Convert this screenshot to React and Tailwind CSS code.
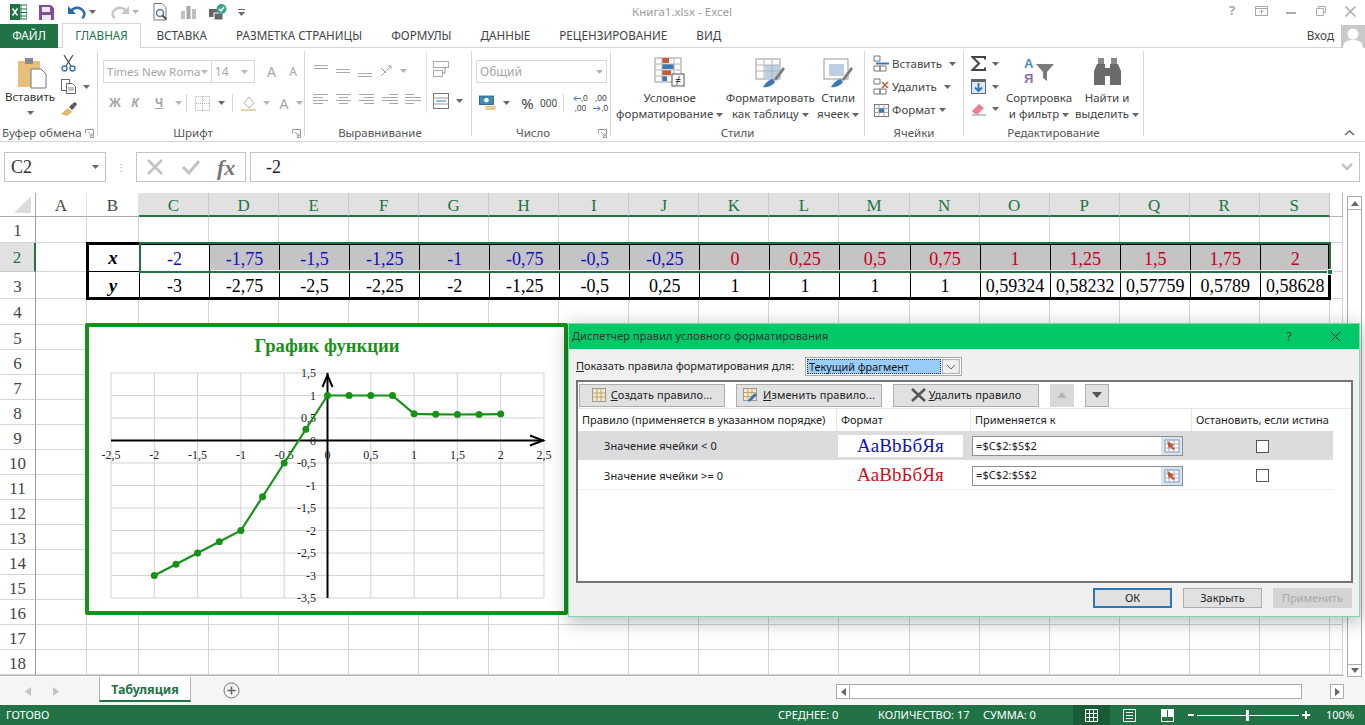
import React from "react";

const UI = "font-['Noto_Sans',sans-serif]";
const SERIF = "font-['Liberation_Serif',serif]";

const colLetters = "ABCDEFGHIJKLMNOPQRS".split("");
const xRow = ["-2", "-1,75", "-1,5", "-1,25", "-1", "-0,75", "-0,5", "-0,25", "0", "0,25", "0,5", "0,75", "1", "1,25", "1,5", "1,75", "2"];
const yRow = ["-3", "-2,75", "-2,5", "-2,25", "-2", "-1,25", "-0,5", "0,25", "1", "1", "1", "1", "0,59324", "0,58232", "0,57759", "0,5789", "0,58628"];
const rowNums = Array.from({ length: 18 }, (_, i) => i + 1);
const tabs = ["ВСТАВКА", "РАЗМЕТКА СТРАНИЦЫ", "ФОРМУЛЫ", "ДАННЫЕ", "РЕЦЕНЗИРОВАНИЕ", "ВИД"];

function Caret({ light }) {
  return (
    <svg width="7" height="4" viewBox="0 0 7 4" className="shrink-0">
      <path d="M0 0h7L3.5 4z" fill={light ? "#b5b5b5" : "#666"} />
    </svg>
  );
}

function Launcher() {
  return (
    <svg width="9" height="9" viewBox="0 0 9 9" className="shrink-0">
      <path d="M0.5 4V0.5H8.5V8.5H5M3 3l4 4M7 4.5V7H4.5" fill="none" stroke="#9a9a9a" />
    </svg>
  );
}

function Lines({ rows, w = 16 }) {
  return (
    <svg width={w} height="14" viewBox={"0 0 " + w + " 14"}>
      {rows.map((r, i) => (
        <line key={i} x1={r[1]} x2={r[2]} y1={r[0] + 0.5} y2={r[0] + 0.5} stroke="#a9a9a9" />
      ))}
    </svg>
  );
}

function Sep() {
  return <div className="w-px h-[18px] bg-[#d6d6d6]" />;
}

function GroupLabel({ children, shifted }) {
  return <div className={"absolute bottom-[-5px] left-0 right-0 text-center text-[11.5px] leading-[16px] text-[#555] " + (shifted ? "pr-[16px]" : "")}>{children}</div>;
}

function ArrowLeft() {
  return <svg width="8" height="7" viewBox="0 0 8 7"><path d="M8 3.5H1M3.500 1L1 3.500 3.500 6" fill="none" stroke="#3a76b5" /></svg>;
}

function ArrowRight() {
  return <svg width="8" height="7" viewBox="0 0 8 7"><path d="M0 3.500h7M4.500 1L7 3.500 4.500 6" fill="none" stroke="#3a76b5" /></svg>;
}

function ChartSvg() {
  const xs = [-2, -1.75, -1.5, -1.25, -1, -0.75, -0.5, -0.25, 0, 0.25, 0.5, 0.75, 1, 1.25, 1.5, 1.75, 2];
  const ys = [-3, -2.75, -2.5, -2.25, -2, -1.25, -0.5, 0.25, 1, 1, 1, 1, 0.59324, 0.58232, 0.57759, 0.5789, 0.58628];
  const px = (v) => 242.5 + 86.6 * v;
  const py = (v) => 117.5 - 45 * v;
  const xTicks = [-2.5, -2, -1.5, -1, -0.5, 0, 0.5, 1, 1.5, 2, 2.5];
  const yTicks = [1.5, 1, 0.5, 0, -0.5, -1, -1.5, -2, -2.5, -3, -3.5];
  const fmt = (v) => String(v).replace(".", ",");
  return (
    <svg width="475" height="284" viewBox="4 4 475 284" className="block">
      <text x="242" y="29" textAnchor="middle" fontFamily="Liberation Serif" fontWeight="700" fontSize="18.67" fill="#179117">График функции</text>
      {xTicks.map((t) => (
        <line key={t} x1={px(t)} x2={px(t)} y1="50" y2="275" stroke="#d2d2d2" />
      ))}
      {yTicks.map((t) => (
        <line key={t} x1={px(-2.5)} x2={px(2.5)} y1={py(t)} y2={py(t)} stroke="#d2d2d2" />
      ))}
      <line x1={px(-2.5)} x2={px(2.5)} y1={py(0)} y2={py(0)} stroke="#000" strokeWidth="2" />
      <line x1={px(0)} x2={px(0)} y1="50" y2="275" stroke="#000" strokeWidth="2" />
      <path d={"M" + (px(0) - 5) + " 64L" + px(0) + " 52L" + (px(0) + 5) + " 64"} fill="none" stroke="#000" strokeWidth="2" />
      <path d={"M" + (px(2.5) - 14) + " " + (py(0) - 5) + "L" + (px(2.5) - 1) + " " + py(0) + "L" + (px(2.5) - 14) + " " + (py(0) + 5)} fill="none" stroke="#000" strokeWidth="2" />
      {xTicks.map((t) => (
        <text key={t} x={px(t)} y="136" textAnchor="middle" fontFamily="Liberation Serif" fontSize="12" fill="#222">{fmt(t)}</text>
      ))}
      {yTicks.map((t) => (
        <text key={t} x="231" y={py(t) + 4} textAnchor="end" fontFamily="Liberation Serif" fontSize="12" fill="#222">{fmt(t)}</text>
      ))}
      <polyline points={xs.map((v, i) => px(v) + "," + py(ys[i])).join(" ")} fill="none" stroke="#179117" strokeWidth="2.2" />
      {xs.map((v, i) => (
        <circle key={v} cx={px(v)} cy={py(ys[i])} r="3.5" fill="#179117" />
      ))}
    </svg>
  );
}

function RangeIcon() {
  return (
    <svg width="16" height="16" viewBox="0 0 16 16">
      <rect x="1" y="2" width="14" height="12" fill="#fff" stroke="#7d95b5" />
      <path d="M1 6h14M1 10h14M5 2v12M10 2v12" stroke="#9db2cc" />
      <path d="M3 3l7 4-2 1 3 3-2 1-3-3-1 2z" fill="#c8502a" />
    </svg>
  );
}

function DlgBtn({ className, children }) {
  return <div className={"flex items-center justify-center h-[23px] border border-[#adadad] bg-[#e1e1e1] text-[11px] text-[#222] tracking-[0.1px] " + className}>{children}</div>;
}

function Dialog() {
  return (
    <div className={"absolute left-[568px] top-[323px] w-[792px] h-[294px] bg-[#f0f0f0] border border-[#7fd8ab] shadow-[0_4px_18px_rgba(0,0,0,0.3)] flex flex-col " + UI}>
      <div className="h-[25px] bg-[#00c868] flex items-center pl-[3px] text-[11px] text-[#333] tracking-[0.1px] shrink-0">
        <span>Диспетчер правил условного форматирования</span>
        <span className="ml-auto text-[13px] text-[#444] mr-[38px]">?</span>
        <svg width="11" height="11" viewBox="0 0 11 11" className="mr-[18px]"><path d="M0.5 0.5l10 10M10.5 0.5l-10 10" stroke="#333" /></svg>
      </div>
      <div className="flex items-center h-[19px] mt-[8px] ml-[7px] shrink-0">
        <span className="text-[11px] text-[#222] w-[229px] whitespace-nowrap"><u>П</u>оказать правила форматирования для:</span>
        <div className="w-[157px] h-[19px] border border-[#a8a8a8] bg-white flex items-center p-px">
          <div className="w-[136px] h-full bg-[#99ccf8] border border-dotted border-[#333] text-[10.8px] leading-[14px] text-[#111] px-px">Текущий фрагмент</div>
          <svg width="18" height="15" viewBox="0 0 18 15" className="ml-px"><rect x="0.5" y="0.5" width="17" height="14" fill="#f0f0f0" stroke="#aaa" /><path d="M5 6l4 4 4-4" fill="none" stroke="#555" /></svg>
        </div>
      </div>
      <div className="mt-[4px] ml-[7px] w-[777px] h-[203px] border-2 border-[#747474] bg-white shrink-0">
        <div className="flex items-center h-[26px] pl-px">
          <DlgBtn className="w-[146px] gap-[5px]">
            <svg width="14" height="14" viewBox="0 0 14 14"><rect x="0.5" y="0.5" width="13" height="13" fill="#f6e9c4" stroke="#999" /><path d="M0.5 5h13M0.5 9h13M5 0.5v13M9 0.5v13" stroke="#b5a77c" /></svg>
            <span><u>С</u>оздать правило...</span>
          </DlgBtn>
          <DlgBtn className="w-[146px] ml-[11px] gap-[4px]">
            <svg width="16" height="15" viewBox="0 0 16 15"><rect x="0.5" y="0.5" width="13" height="12" fill="#f6e9c4" stroke="#999" /><path d="M0.5 4.5h13M0.5 8.5h13M5 0.5v12M9 0.5v12" stroke="#b5a77c" /><path d="M5 14l1-3 6-6 2 2-6 6z" fill="#3f6fb0" /></svg>
            <span><u>И</u>зменить правило...</span>
          </DlgBtn>
          <DlgBtn className="w-[146px] ml-[11px] gap-[3px]">
            <svg width="15" height="14" viewBox="0 0 15 14"><path d="M1 1l13 12M14 1L1 13" stroke="#555" strokeWidth="2.5" /></svg>
            <span><u>У</u>далить правило</span>
          </DlgBtn>
          <div className="w-[24px] h-[23px] ml-[11px] bg-[#d8d8d8] flex items-center justify-center">
            <svg width="10" height="6" viewBox="0 0 10 6"><path d="M0 6h10L5 0z" fill="#b5b5b5" /></svg>
          </div>
          <div className="w-[24px] h-[23px] ml-[11px] bg-[#e1e1e1] border border-[#adadad] flex items-center justify-center">
            <svg width="10" height="6" viewBox="0 0 10 6"><path d="M0 0h10L5 6z" fill="#555" /></svg>
          </div>
        </div>
        <div className="flex h-[23px] items-center text-[11px] text-[#222] whitespace-nowrap border-t border-[#e6e6e6]">
          <div className="w-[259px] pl-[4px] border-r border-[#e6e6e6] h-full flex items-center">Правило (применяется в указанном порядке)</div>
          <div className="w-[134px] pl-[4px] border-r border-[#e6e6e6] h-full flex items-center">Формат</div>
          <div className="w-[221px] pl-[4px] border-r border-[#e6e6e6] h-full flex items-center">Применяется к</div>
          <div className="pl-[4px]">Остановить, если истина</div>
        </div>
        <div className="flex items-center h-[29px] w-[755px] pt-[1px] bg-[#dcdcdf] text-[11px] text-[#222] tracking-[0.1px]">
          <div className="w-[260px] pl-[26px] pt-[1px]">Значение ячейки &lt; 0</div>
          <div className={"w-[125px] h-[22px] bg-white flex items-center justify-center text-[19px] text-[#1111bb] " + SERIF}>АаВbБбЯя</div>
          <div className="w-[9px]" />
          <div className="w-[211px] h-[20px] bg-white border border-[#8e8e8e] flex items-center pl-[3px] text-[11px] justify-between">
            <span>=$C$2:$S$2</span>
            <div className="w-[21px] h-full bg-[#d8e4f2] flex items-center justify-center"><RangeIcon /></div>
          </div>
          <div className="w-[73px]" />
          <div className="w-[13px] h-[13px] bg-white border border-[#555]" />
        </div>
        <div className="flex items-center h-[30px] w-[755px] pt-[2px] border-b border-[#eeeeee] text-[11px] text-[#222] tracking-[0.1px]">
          <div className="w-[260px] pl-[26px] pt-[1px]">Значение ячейки &gt;= 0</div>
          <div className={"w-[125px] flex items-center justify-center text-[19px] text-[#cc1122] " + SERIF}>АаВbБбЯя</div>
          <div className="w-[9px]" />
          <div className="w-[211px] h-[20px] bg-white border border-[#8e8e8e] flex items-center pl-[3px] text-[11px] justify-between">
            <span>=$C$2:$S$2</span>
            <div className="w-[21px] h-full bg-[#d8e4f2] flex items-center justify-center"><RangeIcon /></div>
          </div>
          <div className="w-[73px]" />
          <div className="w-[13px] h-[13px] bg-white border border-[#555]" />
        </div>
      </div>
      <div className="flex justify-end gap-[11px] mt-[5px] mr-[7px]">
        <div className="w-[79px] h-[20px] border-2 border-[#2a78b8] bg-[#e1e1e1] flex items-center justify-center text-[11px] text-[#222]">ОК</div>
        <div className="w-[79px] h-[20px] border border-[#adadad] bg-[#e1e1e1] flex items-center justify-center text-[11px] text-[#222]">Закрыть</div>
        <div className="w-[79px] h-[20px] bg-[#d4d4d4] flex items-center justify-center text-[11px] text-[#a8a8a8]">Применить</div>
      </div>
    </div>
  );
}

function Sheet() {
  return (
    <div className={"h-[484px] flex shrink-0 relative " + SERIF}>
      <div className="grid w-[1344px] h-[483px] content-start grid-cols-[36px_51px_52px_repeat(17,70.06px)_13px] grid-rows-[24px_26px_29px_27px_26px_repeat(14,25px)] border-b border-[#b5b5b5] text-[#444]">
        {/* заголовки столбцов */}
        <div className="border-r border-b border-[#a8a8a8] flex items-end justify-end pr-[4px] pb-[3px]">
          <svg width="17" height="17" viewBox="0 0 17 17"><path d="M17 0v17H0z" fill="#dcdcdc" /></svg>
        </div>
        {colLetters.map((c, i) => (
          <div key={c} className={i < 2
            ? "flex items-center justify-center pt-[3px] text-[17px] border-r border-[#e2e2e2] border-b border-b-[#a8a8a8]"
            : "flex items-center justify-center pt-[3px] text-[17px] bg-[#e1e1e1] text-[#217346] border-r border-[#c8c8c8] border-b-2 border-b-[#217346]"}>{c}</div>
        ))}
        <div className="border-r border-b border-[#b5b5b5]" />

        {rowNums.map((n) => {
          const isSel = n === 2;
          return (
            <React.Fragment key={n}>
              <div className={isSel
                ? "flex items-center justify-center pt-[1px] text-[17px] bg-[#e1e1e1] text-[#217346] border-r-2 border-[#217346] border-b border-b-[#c8c8c8]"
                : "flex items-center justify-center pt-[3px] text-[17px] border-r border-[#9a9a9a] border-b border-b-[#d4d4d4]"}>{n}</div>
              <div className="border-r border-b border-[#d4d4d4]" />
              {n === 2 || n === 3 ? (
                <div className="border-b border-black flex items-center justify-center pt-[2px] text-[19px] font-bold italic text-black">{n === 2 ? "x" : "y"}</div>
              ) : (
                <div className="border-r border-b border-[#d4d4d4]" />
              )}
              {colLetters.slice(2).map((c, i) => {
                if (n === 2) {
                  const bg = i === 0 ? "bg-white" : "bg-[#c4c4c4]";
                  const fg = i < 8 ? "text-[#1111bb]" : "text-[#c00020]";
                  return <div key={c} className={"flex items-center justify-center pt-[3px] text-[18px] border-l border-black " + bg + " " + fg}>{xRow[i]}</div>;
                }
                if (n === 3) {
                  return <div key={c} className="flex items-center justify-center pt-[1px] text-[18px] text-black border-l border-black">{yRow[i]}</div>;
                }
                return <div key={c} className="border-r border-b border-[#d4d4d4]" />;
              })}
              <div className="border-r border-b border-[#d4d4d4]" />
            </React.Fragment>
          );
        })}
      </div>

      {/* рамка таблицы и выделение лежат поверх ячеек */}
      <div className="absolute left-[86px] top-[49px] w-[1245px] h-[58px] border-[3px] border-black pointer-events-none" />
      <div className="absolute left-[139px] top-[49px] w-[1192px] h-[31px] border-2 border-[#217346] pointer-events-none">
        <div className="absolute left-0 right-0 bottom-0 h-px bg-white ml-[70px]" />
      </div>
      <div className="absolute left-[1327px] top-[76px] w-[6px] h-[6px] bg-[#217346] border border-white" />

      <div className="w-[3px]" />
      <div className="w-[15px] mt-[3px] h-[481px] border border-[#ababab] bg-white flex flex-col">
        <div className="h-[13px] flex items-center justify-center border-b border-[#ababab]">
          <svg width="8" height="5" viewBox="0 0 8 5"><path d="M0 5h8L4 0z" fill="#666" /></svg>
        </div>
        <div className="mt-auto h-[12px] flex items-center justify-center border-t border-[#ababab]">
          <svg width="8" height="5" viewBox="0 0 8 5"><path d="M0 0h8L4 5z" fill="#666" /></svg>
        </div>
      </div>
    </div>
  );
}

function Ribbon() {
  return (
    <div className="h-[94px] flex border-b border-[#d4d4d4] relative text-[#444] shrink-0 text-[11.5px]">
      {/* Буфер обмена */}
      <div className="w-[98px] relative border-r border-[#d9d9d9] mt-[3px] mb-[5px] flex">
        <div className="w-[60px] flex flex-col items-center pt-[6px]">
          <svg width="30" height="32" viewBox="0 0 30 32" className="ml-[3px]">
            <rect x="1" y="4" width="22" height="26" fill="#e8bf78" />
            <rect x="8" y="1" width="8" height="6" fill="#8a8a8a" />
            <path d="M14 12h10l5 5v14H14z" fill="#fff" stroke="#777" />
          </svg>
          <div className="mt-[0px] leading-[16px] text-[#333]">Вставить</div>
          <div className="mt-[6px]"><Caret /></div>
        </div>
        <div className="flex flex-col">
          <div className="h-[24px] flex items-center pl-[1px]">
            <svg width="15" height="17" viewBox="0 0 15 17"><path d="M3 0l7 11M12 0L5 11" stroke="#555" strokeWidth="1.3" /><circle cx="3.5" cy="13.5" r="2.5" fill="none" stroke="#3a76b5" strokeWidth="1.4" /><circle cx="11.5" cy="13.5" r="2.5" fill="none" stroke="#3a76b5" strokeWidth="1.4" /></svg>
          </div>
          <div className="h-[23px] flex items-center gap-[7px] pl-[1px]">
            <svg width="15" height="15" viewBox="0 0 15 15"><rect x="0.5" y="0.5" width="8" height="11" fill="#fff" stroke="#666" /><path d="M5.5 4.5h6l3 3v7h-9z" fill="#fff" stroke="#666" /><path d="M7 9h6M7 11h6" stroke="#888" /></svg>
            <Caret />
          </div>
          <div className="h-[22px] flex items-center pl-[1px]">
            <svg width="16" height="14" viewBox="0 0 16 14"><path d="M0 12l7-6 4 4-5 4z" fill="#e3b765" /><path d="M8 5l3-3 3 3-3 3z" fill="#555" /><path d="M11 2l3-2 2 2-2 3z" fill="#555" /></svg>
          </div>
        </div>
        <div className="absolute left-[2px] bottom-[-5px] leading-[16px] text-[#555] whitespace-nowrap">Буфер обмена</div>
        <div className="absolute right-[3px] bottom-[-2px]"><Launcher /></div>
      </div>

      {/* Шрифт */}
      <div className="w-[207px] relative border-r border-[#d9d9d9] mt-[3px] mb-[5px] pl-[5px] text-[#a6a6a6]">
        <div className="flex items-center h-[23px] mt-[9px]">
          <div className="w-[110px] h-[23px] border border-[#d9d9d9] flex items-center justify-between px-[3px]"><span className="text-[11.5px] whitespace-nowrap">Times New Roma</span><Caret light /></div>
          <div className="w-[44px] h-[23px] border border-l-0 border-[#d9d9d9] flex items-center justify-between pl-[3px] pr-[6px]"><span className="text-[12px]">14</span><Caret light /></div>
          <span className="ml-[5px] text-[14px] w-[22px] text-center">A</span>
          <span className="text-[12px] w-[22px] text-center">A</span>
        </div>
        <div className="flex items-center h-[22px] mt-[9px]">
          <span className="w-[24px] text-center font-bold text-[12px]">Ж</span>
          <span className="w-[16px] text-center font-bold italic text-[12px]">К</span>
          <span className="w-[32px] text-center font-bold text-[12px] underline">Ч</span>
          <Caret light />
          <div className="w-[4px]" /><Sep />
          <div className="w-[8px]" />
          <svg width="15" height="15" viewBox="0 0 15 15"><rect x="0.5" y="0.5" width="14" height="14" fill="none" stroke="#aaa" strokeDasharray="1 1" /><path d="M7.5 1v13M1 7.5h13" stroke="#aaa" strokeDasharray="1 1" /></svg>
          <div className="w-[8px]" /><Caret />
          <div className="w-[7px]" /><Sep />
          <div className="w-[8px]" />
          <svg width="17" height="16" viewBox="0 0 17 16"><path d="M3 8l5-6 5 6-5 5z" fill="none" stroke="#b5b5b5" /><path d="M0 14h15v2H0z" fill="#e5d6a9" /></svg>
          <div className="w-[5px]" /><Caret light />
          <span className="ml-[7px] text-[14px] w-[14px] text-center">A</span>
          <div className="w-[5px]" /><Caret light />
        </div>
        <GroupLabel shifted>Шрифт</GroupLabel>
        <div className="absolute right-[3px] bottom-[-2px]"><Launcher /></div>
      </div>

      {/* Выравнивание */}
      <div className="w-[167px] relative border-r border-[#d9d9d9] mt-[3px] mb-[5px] flex">
        <div className="w-[122px] border-r border-[#e2e2e2] h-[62px] pl-[8px]">
          <div className="flex items-center h-[23px] mt-[8px] gap-[6px]">
            <Lines rows={[[1, 1, 15], [4, 1, 15]]} />
            <Lines rows={[[5, 1, 15], [8, 1, 15]]} />
            <Lines rows={[[9, 1, 15], [12, 1, 15]]} />
            <svg width="15" height="14" viewBox="0 0 15 14"><path d="M2 12L12 2M9 2h3v3" fill="none" stroke="#aaa" /><path d="M2 4l5 5" stroke="#b88" /></svg>
            <Caret light />
          </div>
          <div className="flex items-center h-[22px] mt-[7px] gap-[7px]">
            <Lines rows={[[1, 0, 15], [4, 0, 10], [7, 0, 15], [10, 0, 10]]} />
            <Lines rows={[[1, 0, 15], [4, 3, 12], [7, 0, 15], [10, 3, 12]]} />
            <Lines rows={[[1, 0, 15], [4, 5, 15], [7, 0, 15], [10, 5, 15]]} />
            <Lines rows={[[1, 7, 16], [4, 0, 16], [7, 0, 16], [10, 7, 16]]} />
            <Lines rows={[[1, 0, 9], [4, 0, 16], [7, 0, 16], [10, 0, 9]]} />
          </div>
        </div>
        <div className="pl-[6px] flex flex-col">
          <svg width="16" height="16" viewBox="0 0 16 16" className="mt-[10px]"><rect x="0.5" y="0.5" width="15" height="6" fill="none" stroke="#aaa" /><rect x="0.5" y="9.5" width="9" height="6" fill="none" stroke="#aaa" /><path d="M12 7v5H9" fill="none" stroke="#999" /></svg>
          <div className="flex items-center gap-[7px] mt-[16px]">
            <svg width="16" height="16" viewBox="0 0 16 16"><rect x="0.5" y="0.5" width="15" height="15" fill="#fff" stroke="#777" /><path d="M0.5 5h15M0.5 11h15" stroke="#999" /><path d="M3 8h10" stroke="#3a76b5" /></svg>
            <Caret />
          </div>
        </div>
        <GroupLabel shifted>Выравнивание</GroupLabel>
      </div>

      {/* Число */}
      <div className="w-[139px] relative border-r border-[#d9d9d9] mt-[3px] mb-[5px] pl-[4px]">
        <div className="w-[131px] h-[23px] mt-[9px] border border-[#d9d9d9] flex items-center justify-between px-[3px] text-[#a6a6a6]"><span className="text-[12px]">Общий</span><Caret light /></div>
        <div className="flex items-center h-[22px] mt-[9px]">
          <svg width="20" height="17" viewBox="0 0 20 17" className="ml-[3px]"><rect x="0.5" y="0.5" width="15" height="9" fill="#3f8fb5" stroke="#22618a" /><circle cx="8" cy="5" r="2.5" fill="#fff" /><path d="M7 12h11M7 14.5h11" stroke="#e3b765" strokeWidth="1.5" /></svg>
          <div className="w-[6px]" /><Caret />
          <span className="ml-[10px] text-[15px] w-[16px] text-center">%</span>
          <span className="ml-[5px] text-[10px] w-[18px] text-center">000</span>
          <div className="w-[6px]" /><Sep />
          <div className="w-[8px]" />
          <div className="w-[20px] flex flex-col items-center font-['Liberation_Sans',sans-serif] text-[8.5px] leading-[10px]">
            <div className="flex items-center h-[10px]"><ArrowLeft /><span>,0</span></div>
            <div className="h-[10px]">,00</div>
          </div>
          <div className="w-[2px]" />
          <div className="w-[20px] flex flex-col items-center font-['Liberation_Sans',sans-serif] text-[8.5px] leading-[10px]">
            <div className="h-[10px]">,00</div>
            <div className="flex items-center h-[10px]"><ArrowRight /><span>,0</span></div>
          </div>
        </div>
        <GroupLabel shifted>Число</GroupLabel>
        <div className="absolute right-[3px] bottom-[-2px]"><Launcher /></div>
      </div>

      {/* Стили */}
      <div className="w-[254px] relative border-r border-[#d9d9d9] mt-[3px] mb-[5px] flex text-[#444]">
        <div className="w-[118px] flex flex-col items-center pt-[6px]">
          <svg width="31" height="31" viewBox="0 0 31 31"><rect x="1" y="1" width="26" height="24" fill="#fff" stroke="#999" /><rect x="8" y="1" width="7" height="5" fill="#c8593a" /><rect x="8" y="7" width="12" height="5" fill="#3c78b4" /><rect x="8" y="13" width="9" height="5" fill="#c8593a" /><rect x="8" y="19" width="5" height="5" fill="#3c78b4" /><path d="M1 7h26M1 13h26M1 19h26M8 1v24M20 1v24" stroke="#b5b5b5" fill="none" /><rect x="18" y="17" width="12" height="12" fill="#fff" stroke="#555" /><text x="24" y="27" fontSize="10" textAnchor="middle" fill="#333">≠</text></svg>
          <div className="mt-[2px] leading-[16px] text-center whitespace-nowrap">Условное<br />форматирование <span className="inline-block align-middle"><Caret /></span></div>
        </div>
        <div className="w-[84px] flex flex-col items-center pt-[6px]">
          <svg width="31" height="31" viewBox="0 0 31 31"><rect x="1" y="2" width="24" height="20" fill="#fff" stroke="#999" /><rect x="10" y="8" width="15" height="14" fill="#bccfe3" /><path d="M1 8h24M1 14h24M9 2v20M17 2v20" stroke="#b5b5b5" /><path d="M8 30c3-5 7-8 10-8l2 3c-2 3-7 6-12 5z" fill="#3c78b4" /><path d="M19 22l9-12 2 2-9 12z" fill="#7b7b7b" /></svg>
          <div className="mt-[2px] leading-[16px] text-center whitespace-nowrap">Форматировать<br />как таблицу <span className="inline-block align-middle"><Caret /></span></div>
        </div>
        <div className="w-[52px] flex flex-col items-center pt-[6px]">
          <svg width="31" height="31" viewBox="0 0 31 31"><rect x="1" y="2" width="24" height="20" fill="#fff" stroke="#999" /><rect x="6" y="7" width="15" height="12" fill="#bccfe3" /><path d="M8 30c3-5 7-8 10-8l2 3c-2 3-7 6-12 5z" fill="#3c78b4" /><path d="M19 22l9-12 2 2-9 12z" fill="#7b7b7b" /></svg>
          <div className="mt-[2px] leading-[16px] text-center whitespace-nowrap">Стили<br />ячеек <span className="inline-block align-middle"><Caret /></span></div>
        </div>
        <GroupLabel>Стили</GroupLabel>
      </div>

      {/* Ячейки */}
      <div className="w-[99px] relative border-r border-[#d9d9d9] mt-[3px] mb-[5px] pl-[8px] pt-[1px]">
        <div className="flex items-center h-[23px] gap-[2px]">
          <svg width="17" height="17" viewBox="0 0 17 17"><path d="M1 1h6v5H1zM1 11h6v5H1zM7 11h6v5H7z" fill="#fff" stroke="#777" /><path d="M3 8.5h13" stroke="#3c78b4" strokeWidth="2" /></svg>
          <span className="w-[55px]">Вставить</span><Caret />
        </div>
        <div className="flex items-center h-[23px] gap-[2px]">
          <svg width="17" height="17" viewBox="0 0 17 17"><path d="M1 1h6v5H1zM1 11h6v5H1zM7 11h6v5H7z" fill="#fff" stroke="#777" /><path d="M9 4l6 6M15 4l-6 6" stroke="#c8593a" strokeWidth="1.5" /></svg>
          <span className="w-[50px]">Удалить</span><Caret />
        </div>
        <div className="flex items-center h-[23px] gap-[2px]">
          <svg width="17" height="17" viewBox="0 0 17 17"><rect x="1.5" y="3.5" width="14" height="12" fill="#fff" stroke="#777" /><path d="M1.5 7.5h14M1.5 11.5h14M6 3.5v12M11 3.5v12" stroke="#aaa" /><rect x="6" y="7.5" width="5" height="4" fill="#3c78b4" /></svg>
          <span className="w-[45px]">Формат</span><Caret />
        </div>
        <GroupLabel>Ячейки</GroupLabel>
      </div>

      {/* Редактирование */}
      <div className="w-[180px] relative border-r border-[#d9d9d9] mt-[3px] mb-[5px] flex">
        <div className="w-[38px] pl-[7px] pt-[1px]">
          <div className="flex items-center h-[23px] gap-[6px]">
            <svg width="15" height="15" viewBox="0 0 15 15"><path d="M14 3.5V1H1.5l6.5 6.5L1.5 14H14v-2.5" fill="none" stroke="#444" strokeWidth="2" /></svg>
            <Caret />
          </div>
          <div className="flex items-center h-[23px] gap-[6px]">
            <svg width="15" height="15" viewBox="0 0 15 15"><rect x="0.5" y="0.5" width="14" height="14" fill="#dbe8f3" stroke="#666" /><rect x="0" y="0" width="15" height="3" fill="#666" /><path d="M7.5 4v8M4 8.5l3.5 3.5L11 8.5" fill="none" stroke="#2a74b8" strokeWidth="1.8" /></svg>
            <Caret />
          </div>
          <div className="flex items-center h-[22px] gap-[6px]">
            <svg width="15" height="13" viewBox="0 0 15 13"><path d="M1 8l7-7 5 4-6 6H4z" fill="#ef7f8d" /><path d="M1 12h14" stroke="#888" /></svg>
            <Caret />
          </div>
        </div>
        <div className="w-[74px] flex flex-col items-center pt-[6px]">
          <div className="relative w-[32px] h-[31px]">
            <span className="absolute left-[1px] top-[0px] text-[13px] font-bold font-['Liberation_Sans',sans-serif] text-[#4d8cbf] leading-[13px]">А</span>
            <span className="absolute left-[1px] top-[15px] text-[13px] font-bold font-['Liberation_Sans',sans-serif] text-[#8e6bb0] leading-[13px]">Я</span>
            <svg width="19" height="18" viewBox="0 0 19 18" className="absolute left-[13px] top-[7px]"><path d="M0 0h18l-7 8v9l-4-3V8z" fill="#7b7b7b" /></svg>
          </div>
          <div className="mt-[2px] leading-[16px] text-center whitespace-nowrap">Сортировка<br />и фильтр <span className="inline-block align-middle"><Caret /></span></div>
        </div>
        <div className="w-[62px] flex flex-col items-center pt-[7px]">
          <svg width="27" height="27" viewBox="0 0 27 27"><path d="M3 6h8v21H0V13zM16 6h8l3 7v14H16zM11 10h5v8h-5z" fill="#6b6b6b" /><rect x="4" y="0" width="6" height="6" fill="#8a8a8a" /><rect x="17" y="0" width="6" height="6" fill="#8a8a8a" /></svg>
          <div className="mt-[5px] leading-[16px] text-center whitespace-nowrap">Найти и<br />выделить <span className="inline-block align-middle"><Caret /></span></div>
        </div>
        <GroupLabel>Редактирование</GroupLabel>
      </div>

      <svg width="11" height="7" viewBox="0 0 11 7" className="absolute left-[1344px] top-[81px]"><path d="M1 6l4.5-4L10 6" fill="none" stroke="#666" strokeWidth="1.5" /></svg>
    </div>
  );
}

export default function App() {
  return (
    <div className={"relative w-[1365px] h-[725px] overflow-hidden bg-white flex flex-col " + UI}>
      {/* заголовок окна */}
      <div className="h-[24px] flex items-center relative shrink-0">
        <div className="flex items-center pl-[10px]">
          <svg width="17" height="16" viewBox="0 0 17 16"><rect x="6" y="1" width="11" height="14" fill="#fff" stroke="#1f7244" /><path d="M11 1v14M6 5h11M6 8.5h11M6 12h11" stroke="#1f7244" /><rect x="0" y="0" width="10" height="16" fill="#1f7244" /><path d="M2.5 4.5l5 7M7.5 4.5l-5 7" stroke="#fff" strokeWidth="1.5" /></svg>
          <svg width="15" height="15" viewBox="0 0 15 15" className="ml-[12px]"><path d="M0 0h12l3 3v12H0z" fill="#7e4f94" /><rect x="3" y="2" width="8" height="5" fill="#efe6f3" /><rect x="3" y="10" width="9" height="5" fill="#efe6f3" /></svg>
          <svg width="18" height="14" viewBox="0 0 18 14" className="ml-[14px]"><path d="M3 6c3-4 9-5 13 1 1 2 0 5-2 6" fill="none" stroke="#2b6ba8" strokeWidth="2.5" /><path d="M0 1v8h8z" fill="#2b6ba8" /></svg>
          <div className="ml-[3px]"><Caret /></div>
          <svg width="18" height="14" viewBox="0 0 18 14" className="ml-[15px]"><path d="M15 6c-3-4-9-5-13 1-1 2 0 5 2 6" fill="none" stroke="#c8c8c8" strokeWidth="2.5" /><path d="M18 1v8h-8z" fill="#c8c8c8" /></svg>
          <div className="ml-[3px]"><Caret light /></div>
          <svg width="16" height="18" viewBox="0 0 16 18" className="ml-[14px]"><path d="M1 0.5h8l4 4V17H1z" fill="#fff" stroke="#777" /><circle cx="7" cy="10" r="3.5" fill="none" stroke="#5a7d91" strokeWidth="1.5" /><path d="M9.5 12.5l4 4" stroke="#555" strokeWidth="2" /></svg>
          <svg width="15" height="13" viewBox="0 0 15 13" className="ml-[12px]"><rect x="0" y="5" width="4" height="8" fill="#c0c0c0" /><rect x="5.5" y="0" width="4" height="13" fill="#a8a8a8" /><rect x="11" y="3" width="4" height="10" fill="#c0c0c0" /></svg>
          <svg width="18" height="17" viewBox="0 0 18 17" className="ml-[13px]"><rect x="0" y="5" width="9" height="8" fill="#666" /><rect x="5" y="9" width="9" height="7" fill="#666" stroke="#fff" /><circle cx="12.5" cy="5" r="5" fill="#3aa58d" /><path d="M10 5l2 2 3-4" fill="none" stroke="#fff" strokeWidth="1.3" /></svg>
          <svg width="7" height="7" viewBox="0 0 7 7" className="ml-[11px]"><path d="M0 3h7L3.5 7z" fill="#666" /><path d="M0 0.5h7" stroke="#666" /></svg>
        </div>
        <div className="absolute left-[632px] top-[3px] text-[11.5px] leading-[18px] text-[#9c9c9c]">Книга1.xlsx - Excel</div>
        <div className="absolute right-[9px] top-[5px] flex items-center h-[12px] text-[#a8a8a8]">
          <span className="w-[12px] text-center text-[13px] font-bold">?</span>
          <svg width="13" height="10" viewBox="0 0 13 10" className="ml-[17px]"><rect x="0.5" y="0.5" width="12" height="9" fill="none" stroke="#aaa" /><path d="M0.5 2.5h12M6.5 8V4M4.5 6l2-2 2 2" fill="none" stroke="#aaa" /></svg>
          <svg width="10" height="2" viewBox="0 0 10 2" className="ml-[18px] mt-[4px]"><rect width="10" height="2" fill="#aaa" /></svg>
          <svg width="10" height="10" viewBox="0 0 10 10" className="ml-[20px]"><path d="M2.5 2.5v-2h7v6h-2M0.5 2.5h7v7h-7z" fill="none" stroke="#aaa" /></svg>
          <svg width="11" height="11" viewBox="0 0 11 11" className="ml-[19px]"><path d="M0.5 0.5l10 10M10.5 0.5l-10 10" stroke="#aaa" strokeWidth="1.5" /></svg>
        </div>
      </div>

      {/* вкладки */}
      <div className="h-[24px] flex items-end relative shrink-0 text-[11.7px]">
        <div className="absolute left-0 right-0 bottom-0 h-px bg-[#d4d4d4]" />
        <div className="w-[58px] h-[24px] bg-[#217346] text-white flex items-center justify-center relative">ФАЙЛ</div>
        <div className="ml-[4px] w-[79px] h-[25px] bg-white border border-b-0 border-[#d4d4d4] text-[#217346] flex items-center justify-center relative">ГЛАВНАЯ</div>
        <div className="flex items-center h-[24px] text-[#444] pl-[1px] relative">
          {tabs.map((t) => (
            <div key={t} className="px-[14.5px] whitespace-nowrap">{t}</div>
          ))}
        </div>
        <div className="ml-auto flex items-center h-[24px] relative">
          <span className="text-[#444] mr-[7px]">Вход</span>
          <div className="w-[24px] h-[23px] bg-[#c9c9c9] overflow-hidden">
            <svg width="24" height="23" viewBox="0 0 24 23"><circle cx="12" cy="9" r="5.5" fill="#fff" /><path d="M2 23c0-6 4-8 10-8s10 2 10 8z" fill="#fff" /></svg>
          </div>
        </div>
      </div>

      <Ribbon />

      {/* строка формул */}
      <div className="h-[51px] shrink-0 pt-[10px] pl-[4px] flex items-start">
        <div className="w-[102px] h-[30px] border border-[#c4c4c4] flex items-center justify-between pl-[6px] pr-[6px]">
          <span className={"text-[18px] text-[#333] " + SERIF}>C2</span>
          <Caret />
        </div>
        <div className="w-[30px] h-[30px] flex items-center justify-center text-[#aaa] text-[10px] leading-[5px]">⋮</div>
        <div className="w-[110px] h-[30px] border border-[#c4c4c4] flex items-center">
          <svg width="18" height="16" viewBox="0 0 18 16" className="ml-[9px]"><path d="M2 1l14 14M16 1L2 15" stroke="#c2c2c2" strokeWidth="2.5" /></svg>
          <svg width="20" height="16" viewBox="0 0 20 16" className="ml-[17px]"><path d="M2 8l6 6L18 2" fill="none" stroke="#c2c2c2" strokeWidth="3" /></svg>
          <span className={"ml-[16px] text-[22px] italic font-bold text-[#777] " + SERIF}>fx</span>
        </div>
        <div className="w-[4px]" />
        <div className="w-[1110px] h-[30px] border border-[#c4c4c4] flex items-center pl-[15px] pr-[6px] justify-between">
          <span className={"text-[18px] text-[#222] " + SERIF}>-2</span>
          <svg width="12" height="8" viewBox="0 0 12 8"><path d="M1 1l5 5 5-5" fill="none" stroke="#c2c2c2" strokeWidth="2.5" /></svg>
        </div>
      </div>

      <Sheet />

      {/* листы */}
      <div className="h-[28px] shrink-0 bg-[#f5f5f5] flex items-start relative">
        <svg width="6" height="9" viewBox="0 0 6 9" className="ml-[25px] mt-[10px]"><path d="M6 0v9L0 4.5z" fill="#c4c4c4" /></svg>
        <svg width="6" height="9" viewBox="0 0 6 9" className="ml-[22px] mt-[10px]"><path d="M0 0v9l6-4.5z" fill="#c4c4c4" /></svg>
        <div className="ml-[40px] w-[92px] h-[25px] pt-[4px] bg-white border-x border-[#b5b5b5] border-b-2 border-b-[#217346] flex items-center justify-center text-[12.5px] font-bold text-[#217346]">Табуляция</div>
        <svg width="17" height="17" viewBox="0 0 17 17" className="ml-[32px] mt-[5px]"><circle cx="8.5" cy="8.5" r="7.5" fill="none" stroke="#777" /><path d="M8.5 4.5v8M4.5 8.5h8" stroke="#666" strokeWidth="1.5" /></svg>
        <div className="ml-auto mr-[21px] mt-[7px] w-[508px] h-[15px] flex">
          <div className="w-[14px] border border-[#ababab] bg-white flex items-center justify-center"><svg width="5" height="8" viewBox="0 0 5 8"><path d="M5 0v8L0 4z" fill="#666" /></svg></div>
          <div className="w-[452px] border-y border-r border-[#ababab] bg-white" />
          <div className="w-[28px]" />
          <div className="w-[14px] border border-[#ababab] bg-white flex items-center justify-center"><svg width="5" height="8" viewBox="0 0 5 8"><path d="M0 0v8l5-4z" fill="#666" /></svg></div>
        </div>
      </div>

      {/* строка состояния */}
      <div className="h-[20px] shrink-0 bg-[#217346] text-white text-[11px] flex items-center relative">
        <span className="ml-[6px] w-[50px]">ГОТОВО</span>
        <span className="ml-[722px] w-[100px]">СРЕДНЕЕ: 0</span>
        <span className="w-[105px]">КОЛИЧЕСТВО: 17</span>
        <span className="w-[90px]">СУММА: 0</span>
        <div className="w-[37px] h-[20px] bg-[#195a37] flex items-center justify-center">
          <svg width="13" height="13" viewBox="0 0 13 13"><path d="M0.5 0.5h12v12h-12zM4.5 0.5v12M8.5 0.5v12M0.5 4.5h12M0.5 8.5h12" fill="none" stroke="#fff" /></svg>
        </div>
        <svg width="13" height="13" viewBox="0 0 13 13" className="ml-[13px]"><path d="M0.5 0.5h12v12h-12z" fill="none" stroke="#fff" /><path d="M3 3.5h7M3 6.5h7M3 9.5h7" stroke="#fff" /></svg>
        <svg width="13" height="13" viewBox="0 0 13 13" className="ml-[25px]"><path d="M0.5 0.5h12v12h-12z" fill="none" stroke="#fff" /><path d="M0 0h6v8H0zM7 0h6v8H7z" fill="#fff" /></svg>
        <svg width="6" height="2" viewBox="0 0 6 2" className="ml-[14px]"><rect width="6" height="2" fill="#fff" /></svg>
        <div className="relative ml-[3px] w-[102px] h-px bg-white">
          <div className="absolute left-[49px] -top-[5px] w-[3px] h-[11px] bg-white" />
        </div>
        <svg width="8" height="8" viewBox="0 0 8 8" className="ml-[3px]"><path d="M0 4h8M4 0v8" stroke="#fff" strokeWidth="2" /></svg>
        <span className="ml-[16px]">100%</span>
      </div>

      {/* диаграмма и окно лежат поверх листа */}
      <div className="absolute left-[85px] top-[323px] w-[483px] h-[292px] bg-white border-[4px] border-[#179117] rounded-[2px]">
        <ChartSvg />
      </div>
      <Dialog />
    </div>
  );
}
